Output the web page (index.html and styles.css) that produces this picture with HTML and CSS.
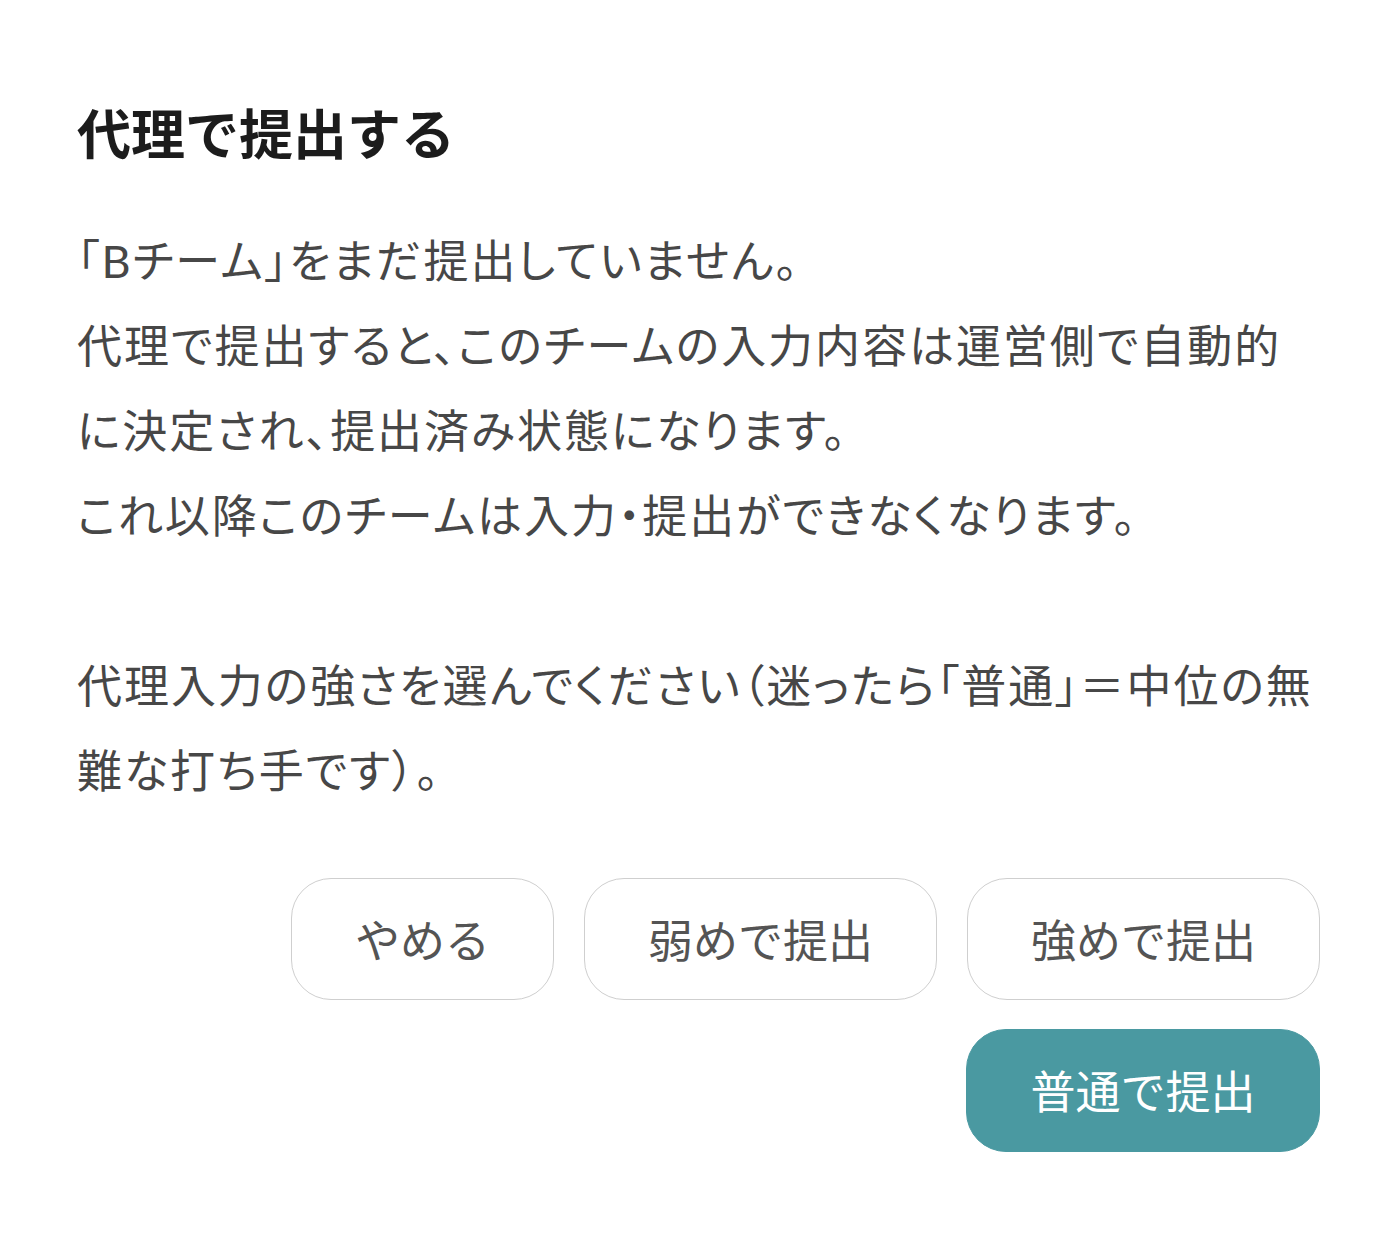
FILE: index.html
```html
<!DOCTYPE html>
<html lang="ja">
<head>
<meta charset="utf-8">
<title>代理で提出する</title>
<link rel="stylesheet" href="styles.css">
</head>
<body>
<div class="dialog">
  <h1 class="title">代理で提出する</h1>
  <p class="text">「Bチーム」をまだ提出していません。<br>代理で提出すると、このチームの入力内容は運営側で自動的に決定され、提出済み状態になります。<br>これ以降このチームは入力・提出ができなくなります。</p>
  <p class="text text-second">代理入力の強さを選んでください（迷ったら「普通」＝中位の無難な打ち手です）。</p>
  <div class="actions">
    <button class="btn">やめる</button>
    <button class="btn">弱めで提出</button>
    <button class="btn">強めで提出</button>
    <button class="btn btn-primary">普通で提出</button>
  </div>
</div>
</body>
</html>
```

FILE: styles.css
```css
html, body {
  margin: 0;
  padding: 0;
  background: #ffffff;
}

body {
  font-family: "Lato", "Noto Sans CJK JP", sans-serif;
}

.dialog {
  padding: 97px 77px 0 77px;
  box-sizing: border-box;
  width: 1397px;
}

.title {
  margin: 0 0 46px 0;
  font-size: 54px;
  line-height: 76px;
  font-weight: 700;
  color: #1c1c1c;
}

.text {
  margin: 0;
  font-size: 45px;
  line-height: 85px;
  color: #474747;
  font-feature-settings: "palt";
  letter-spacing: 1.95px;
}

.text-second {
  margin-top: 85px;
}

.actions {
  display: flex;
  flex-wrap: wrap;
  justify-content: flex-end;
  gap: 29px 30px;
  margin-top: 64px;
}

.btn {
  font-family: "Lato", "Noto Sans CJK JP", sans-serif;
  font-size: 45px;
  height: 122px;
  padding: 4px 63px 0 63px;
  border: 1px solid #cfcfcf;
  border-radius: 40px;
  background: #ffffff;
  color: #545454;
  line-height: 1;
}

.btn-primary {
  background: #4a99a1;
  border-color: #4a99a1;
  color: #ffffff;
  width: 354px;
  height: 123px;
}
```
